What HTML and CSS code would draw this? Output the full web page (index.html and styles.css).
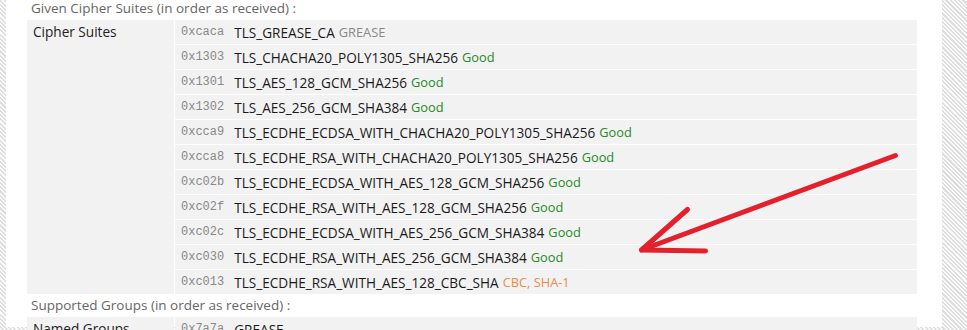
FILE: index.html
```html
<!DOCTYPE html>
<html>
<head>
<meta charset="utf-8">
<link rel="stylesheet" href="styles.css">
</head>
<body>
<div class="page">
  <div class="content">
    <div class="heading first">Given Cipher Suites (in order as received) :</div>
    <div class="kv">
      <div class="key">Cipher Suites</div>
      <div class="vals">
        <div class="row"><span class="hex">0xcaca</span><span class="name">TLS_GREASE_CA</span><span class="tag grease">GREASE</span></div>
        <div class="row"><span class="hex">0x1303</span><span class="name">TLS_CHACHA20_POLY1305_SHA256</span><span class="tag good">Good</span></div>
        <div class="row"><span class="hex">0x1301</span><span class="name">TLS_AES_128_GCM_SHA256</span><span class="tag good">Good</span></div>
        <div class="row"><span class="hex">0x1302</span><span class="name">TLS_AES_256_GCM_SHA384</span><span class="tag good">Good</span></div>
        <div class="row"><span class="hex">0xcca9</span><span class="name">TLS_ECDHE_ECDSA_WITH_CHACHA20_POLY1305_SHA256</span><span class="tag good">Good</span></div>
        <div class="row"><span class="hex">0xcca8</span><span class="name">TLS_ECDHE_RSA_WITH_CHACHA20_POLY1305_SHA256</span><span class="tag good">Good</span></div>
        <div class="row"><span class="hex">0xc02b</span><span class="name">TLS_ECDHE_ECDSA_WITH_AES_128_GCM_SHA256</span><span class="tag good">Good</span></div>
        <div class="row"><span class="hex">0xc02f</span><span class="name">TLS_ECDHE_RSA_WITH_AES_128_GCM_SHA256</span><span class="tag good">Good</span></div>
        <div class="row"><span class="hex">0xc02c</span><span class="name">TLS_ECDHE_ECDSA_WITH_AES_256_GCM_SHA384</span><span class="tag good">Good</span></div>
        <div class="row"><span class="hex">0xc030</span><span class="name">TLS_ECDHE_RSA_WITH_AES_256_GCM_SHA384</span><span class="tag good">Good</span></div>
        <div class="row"><span class="hex">0xc013</span><span class="name">TLS_ECDHE_RSA_WITH_AES_128_CBC_SHA</span><span class="tag weak">CBC, SHA-1</span></div>
      </div>
    </div>
    <div class="heading">Supported Groups (in order as received) :</div>
    <div class="kv">
      <div class="key">Named Groups</div>
      <div class="vals">
        <div class="row"><span class="hex">0x7a7a</span><span class="name">GREASE</span></div>
        <div class="row"><span class="hex">0x001d</span><span class="name">x25519</span></div>
      </div>
    </div>
  </div>
  <svg class="arrow" width="967" height="330" viewBox="0 0 967 330">
    <g fill="none" stroke="#e3202b" stroke-width="5" stroke-linecap="round" stroke-linejoin="round">
      <path d="M895.5 155.5 L641.5 250"/>
      <path d="M687.5 209.5 L641.5 250 L705.5 251"/>
    </g>
  </svg>
</div>
</body>
</html>
```

FILE: styles.css
```css
html, body {
  margin: 0;
  padding: 0;
}
body {
  width: 967px;
  height: 330px;
  overflow: hidden;
  font-family: "Open Sans", "Noto Sans", sans-serif;
  font-size: 13.6px;
}
.page {
  position: relative;
  width: 967px;
  height: 330px;
  overflow: hidden;
  background: repeating-linear-gradient(45deg, #fafafa 0px, #fafafa 1.5px, #dedede 1.5px, #dedede 3px);
}
.content {
  margin-left: 6px;
  width: 936px;
  height: 330px;
  box-sizing: border-box;
  padding: 0 25px 0 21px;
  background: #fff;
}
.heading {
  height: 23px;
  line-height: 23px;
  padding-left: 4px;
  color: #666;
  font-size: 13.5px;
  white-space: nowrap;
}
.heading.first {
  margin-top: -3px;
}
.kv {
  display: grid;
  grid-template-columns: 147px 1fr;
  column-gap: 1px;
}
.key {
  background: #f2f2f2;
  color: #222;
  padding: 0 6px;
  line-height: 24px;
}
.vals {
  display: flex;
  flex-direction: column;
  gap: 1px;
}
.row {
  height: 24px;
  display: flex;
  align-items: center;
  background: #f2f2f2;
  padding-left: 6px;
  white-space: nowrap;
  color: #1a1a1a;
}
.hex {
  font-family: "Liberation Mono", monospace;
  font-size: 12px;
  color: #888;
  margin-right: 10px;
}
.tag {
  font-size: 12.8px;
  margin-left: 4px;
}
.tag.good { color: #1f8a1f; }
.tag.grease { color: #888; }
.tag.weak { color: #ee8a4a; }
.arrow {
  position: absolute;
  left: 0;
  top: 0;
  pointer-events: none;
}
```
